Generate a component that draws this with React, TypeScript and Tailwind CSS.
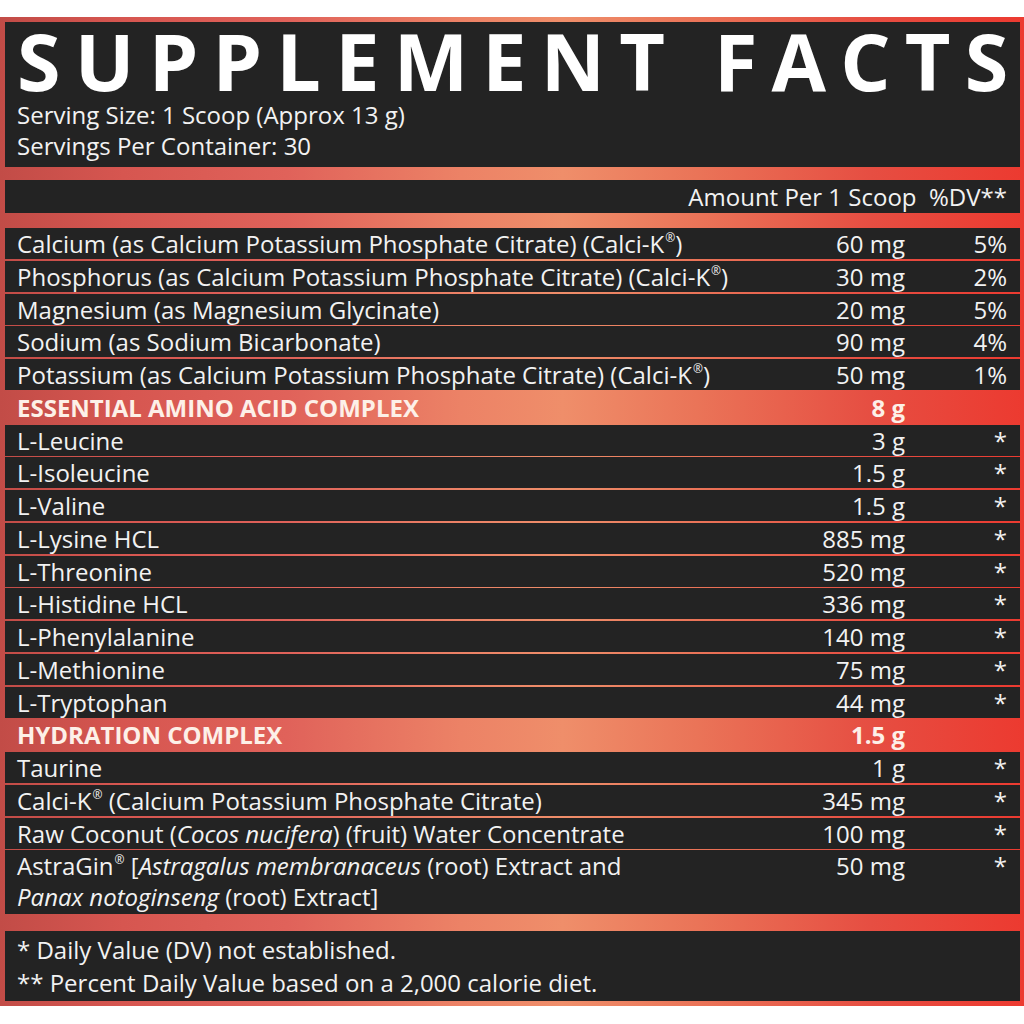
import React from "react";

type Row =
  | { kind: "row"; name: React.ReactNode; amt: string; dv: string; double?: boolean }
  | { kind: "head"; name: string; amt: string };

const R = () => <span className="text-[0.5em] leading-none align-top relative top-[0.35em] ml-[1px]">®</span>;

const rows: Row[] = [
  { kind: "row", name: <>Calcium (as Calcium Potassium Phosphate Citrate) (Calci-K<R />)</>, amt: "60 mg", dv: "5%" },
  { kind: "row", name: <>Phosphorus (as Calcium Potassium Phosphate Citrate) (Calci-K<R />)</>, amt: "30 mg", dv: "2%" },
  { kind: "row", name: "Magnesium (as Magnesium Glycinate)", amt: "20 mg", dv: "5%" },
  { kind: "row", name: "Sodium (as Sodium Bicarbonate)", amt: "90 mg", dv: "4%" },
  { kind: "row", name: <>Potassium (as Calcium Potassium Phosphate Citrate) (Calci-K<R />)</>, amt: "50 mg", dv: "1%" },
  { kind: "head", name: "ESSENTIAL AMINO ACID COMPLEX", amt: "8 g" },
  { kind: "row", name: "L-Leucine", amt: "3 g", dv: "*" },
  { kind: "row", name: "L-Isoleucine", amt: "1.5 g", dv: "*" },
  { kind: "row", name: "L-Valine", amt: "1.5 g", dv: "*" },
  { kind: "row", name: "L-Lysine HCL", amt: "885 mg", dv: "*" },
  { kind: "row", name: "L-Threonine", amt: "520 mg", dv: "*" },
  { kind: "row", name: "L-Histidine HCL", amt: "336 mg", dv: "*" },
  { kind: "row", name: "L-Phenylalanine", amt: "140 mg", dv: "*" },
  { kind: "row", name: "L-Methionine", amt: "75 mg", dv: "*" },
  { kind: "row", name: "L-Tryptophan", amt: "44 mg", dv: "*" },
  { kind: "head", name: "HYDRATION COMPLEX", amt: "1.5 g" },
  { kind: "row", name: "Taurine", amt: "1 g", dv: "*" },
  { kind: "row", name: <>Calci-K<R /> (Calcium Potassium Phosphate Citrate)</>, amt: "345 mg", dv: "*" },
  { kind: "row", name: <>Raw Coconut (<i>Cocos nucifera</i>) (fruit) Water Concentrate</>, amt: "100 mg", dv: "*" },
  {
    kind: "row",
    double: true,
    name: (
      <>
        AstraGin<R /> [<i>Astragalus membranaceus</i> (root) Extract and
        <br />
        <i>Panax notoginseng</i> (root) Extract]
      </>
    ),
    amt: "50 mg",
    dv: "*",
  },
];

export default function App() {
  return (
    <div
      className="w-[1024px] h-[1024px] bg-white pt-[17px] text-[#f2f2f2]"
      style={{ fontFamily: '"Open Sans", "Noto Sans", sans-serif' }}
    >
      <div className="h-[989px] pl-[5px] pr-[4px] pt-[5px] flex flex-col bg-[linear-gradient(90deg,#c24c47_0%,#d65650_12%,#e0625a_28%,#ec8266_45%,#ef8e6a_55%,#ea7458_68%,#e64e42_85%,#ec3a30_100%)]">
        {/* Title panel */}
        <div className="h-[145px] bg-[#232323] px-[12px]">
          <div className="mt-[7px] h-[64px] text-[79px] font-bold leading-[64px] tracking-[0.18em] whitespace-nowrap text-white">
            SUPPLEMENT FACTS
          </div>
          <div className="mt-[6px] text-[24px] leading-[31px]">Serving Size: 1 Scoop (Approx 13 g)</div>
          <div className="text-[24px] leading-[31px]">Servings Per Container: 30</div>
        </div>

        {/* Amount header */}
        <div className="mt-[13px] h-[33px] bg-[#232323] flex items-center justify-end pr-[13px] text-[24px] leading-[33px] whitespace-pre">
          {"Amount Per 1 Scoop  %DV**"}
        </div>

        {/* Table */}
        <div className="mt-[15px] flex flex-col gap-[1.75px]">
          {rows.map((r, i) =>
            r.kind === "head" ? (
              <div key={i} className="h-[31px] flex items-center text-[24px] leading-[31px] font-bold text-[#fdf0e8]">
                <div className="flex-1 min-w-0 pl-[12px] whitespace-nowrap">{r.name}</div>
                <div className="w-[200px] shrink-0 text-right">{r.amt}</div>
                <div className="w-[115px] shrink-0" />
              </div>
            ) : (
              <div
                key={i}
                className={`${r.double ? "h-[64px] items-start" : "h-[31px] items-center"} bg-[#232323] flex text-[24px] leading-[31px]`}
              >
                <div className="flex-1 min-w-0 pl-[12px] whitespace-nowrap">{r.name}</div>
                <div className="w-[200px] shrink-0 text-right">{r.amt}</div>
                <div className="w-[115px] shrink-0 text-right pr-[13px]">{r.dv}</div>
              </div>
            )
          )}
        </div>

        {/* Footer */}
        <div className="mt-[17px] h-[70px] bg-[#232323] pl-[12px] pt-[2px] text-[24px] leading-[33px]">
          <div>* Daily Value (DV) not established.</div>
          <div>** Percent Daily Value based on a 2,000 calorie diet.</div>
        </div>
      </div>
    </div>
  );
}
